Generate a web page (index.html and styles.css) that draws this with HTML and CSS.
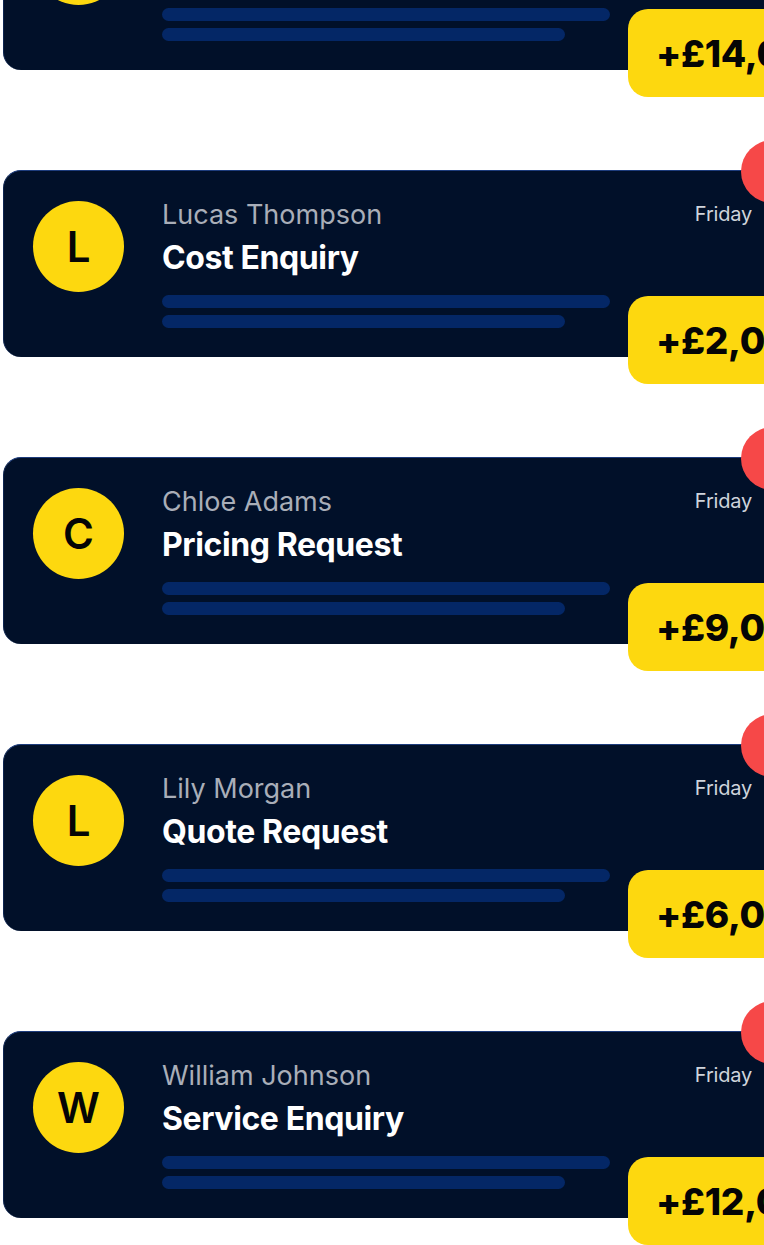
FILE: index.html
```html
<!doctype html>
<html lang="en">
  <head>
    <meta charset="utf-8">
    <meta name="viewport" content="width=device-width, initial-scale=1.0">
    <title>Enquiries</title>
    <link rel="stylesheet" href="styles.css">
  </head>
  <body>
    <div class="feed">
      <!-- Enquiry cards -->
      <div class="card">
        <div class="avatar">O</div>
        <div class="card-body">
          <div class="card-head">
            <span class="name">Olivia Bennett</span>
            <span class="date">Friday</span>
          </div>
          <h2 class="subject">Project Enquiry</h2>
          <div class="bar bar-long"></div>
          <div class="bar bar-short"></div>
        </div>
        <span class="dot"></span>
        <span class="amount">+£14,000</span>
      </div>

      <div class="card">
        <div class="avatar">L</div>
        <div class="card-body">
          <div class="card-head">
            <span class="name">Lucas Thompson</span>
            <span class="date">Friday</span>
          </div>
          <h2 class="subject">Cost Enquiry</h2>
          <div class="bar bar-long"></div>
          <div class="bar bar-short"></div>
        </div>
        <span class="dot"></span>
        <span class="amount">+£2,000</span>
      </div>

      <div class="card">
        <div class="avatar">C</div>
        <div class="card-body">
          <div class="card-head">
            <span class="name">Chloe Adams</span>
            <span class="date">Friday</span>
          </div>
          <h2 class="subject">Pricing Request</h2>
          <div class="bar bar-long"></div>
          <div class="bar bar-short"></div>
        </div>
        <span class="dot"></span>
        <span class="amount">+£9,000</span>
      </div>

      <div class="card">
        <div class="avatar">L</div>
        <div class="card-body">
          <div class="card-head">
            <span class="name">Lily Morgan</span>
            <span class="date">Friday</span>
          </div>
          <h2 class="subject">Quote Request</h2>
          <div class="bar bar-long"></div>
          <div class="bar bar-short"></div>
        </div>
        <span class="dot"></span>
        <span class="amount">+£6,000</span>
      </div>

      <div class="card">
        <div class="avatar">W</div>
        <div class="card-body">
          <div class="card-head">
            <span class="name">William Johnson</span>
            <span class="date">Friday</span>
          </div>
          <h2 class="subject">Service Enquiry</h2>
          <div class="bar bar-long"></div>
          <div class="bar bar-short"></div>
        </div>
        <span class="dot"></span>
        <span class="amount">+£12,000</span>
      </div>
    </div>
  </body>
</html>
```

FILE: styles.css
```css
* {
  margin: 0;
  padding: 0;
  box-sizing: border-box;
}

html,
body {
  overflow: hidden;
}

body {
  background: #ffffff;
  font-family: 'Inter', 'Liberation Sans', sans-serif;
  min-height: 100vh;
}

.feed {
  display: flex;
  flex-direction: column;
  gap: 100px;
  margin-top: -117px;
  padding-left: 3px;
}

.card {
  position: relative;
  width: 820px;
  height: 187px;
  flex-shrink: 0;
  display: flex;
  align-items: flex-start;
  gap: 38px;
  padding: 30px 71px 0 29px;
  background: #011029;
  border-top: 1px solid #1d3c7c;
  border-left: 1px solid #0d2450;
  border-radius: 18px;
}

.avatar {
  width: 91px;
  height: 91px;
  flex-shrink: 0;
  border-radius: 50%;
  background: #fdd80f;
  color: #050505;
  font-size: 42px;
  font-weight: 600;
  display: flex;
  align-items: center;
  justify-content: center;
}

.card-body {
  flex: 1;
  display: flex;
  flex-direction: column;
}

.card-head {
  display: flex;
  justify-content: space-between;
  align-items: baseline;
  margin-top: -3px;
}

.name {
  color: #a9aeb8;
  font-size: 27px;
  font-weight: 400;
  line-height: 34px;
}

.date {
  color: #cfd4dc;
  font-size: 20px;
  letter-spacing: -0.2px;
  position: relative;
  top: -3px;
}

.subject {
  color: #ffffff;
  font-size: 32px;
  font-weight: 700;
  letter-spacing: -0.4px;
  line-height: 38px;
  margin-top: 7px;
  margin-bottom: 18px;
}

.bar {
  height: 13px;
  border-radius: 7px;
  background: #042766;
}

.bar-long {
  width: 448px;
  margin-bottom: 7px;
}

.bar-short {
  width: 403px;
}

.dot {
  position: absolute;
  left: 737px;
  top: -31px;
  width: 63px;
  height: 63px;
  border-radius: 50%;
  background: #f64848;
}

.amount {
  position: absolute;
  left: 624px;
  top: 125px;
  height: 88px;
  padding: 0 28px;
  display: flex;
  align-items: center;
  border-radius: 20px;
  background: #fdd80f;
  color: #050505;
  font-size: 37px;
  font-weight: 800;
  letter-spacing: -0.3px;
  white-space: nowrap;
}
```
